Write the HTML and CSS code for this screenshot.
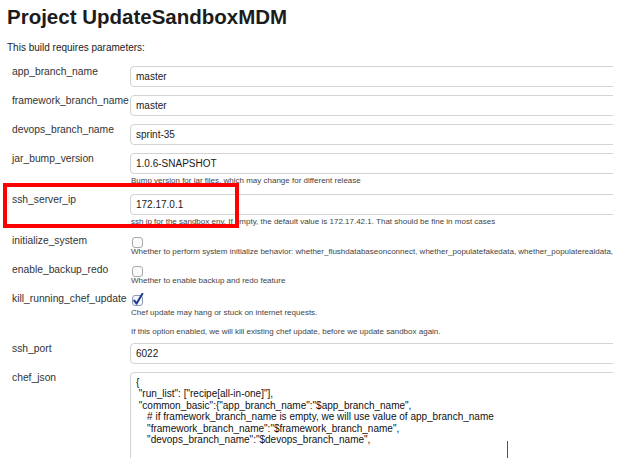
FILE: index.html
```html
<!DOCTYPE html>
<html>
<head>
<meta charset="utf-8">
<title>Project UpdateSandboxMDM</title>
<link rel="stylesheet" href="styles.css">
</head>
<body>
<div class="page">
  <h1 class="title">Project UpdateSandboxMDM</h1>
  <p class="intro">This build requires parameters:</p>
  <div class="params">
    <div class="row">
      <div class="label">app_branch_name</div>
      <div class="value"><input class="field" type="text" value="master"></div>
    </div>
    <div class="row">
      <div class="label">framework_branch_name</div>
      <div class="value"><input class="field" type="text" value="master"></div>
    </div>
    <div class="row">
      <div class="label">devops_branch_name</div>
      <div class="value"><input class="field" type="text" value="sprint-35"></div>
    </div>
    <div class="row">
      <div class="label">jar_bump_version</div>
      <div class="value">
        <input class="field" type="text" value="1.0.6-SNAPSHOT">
        <div class="help">Bump version for jar files, which may change for different release</div>
      </div>
    </div>
    <div class="row">
      <div class="label">ssh_server_ip</div>
      <div class="value">
        <input class="field" type="text" value="172.17.0.1">
        <div class="help">ssh ip for the sandbox env. If empty, the default value is 172.17.42.1. That should be fine in most cases</div>
      </div>
      <span class="mark"></span>
    </div>
    <div class="row check">
      <div class="label">initialize_system</div>
      <div class="value">
        <span class="cb"><svg width="11" height="11" viewBox="0 0 11 11"><rect x="0.5" y="0.5" width="10" height="10" rx="2.5" fill="#fafafa" stroke="#a9a9a9"/></svg></span>
        <div class="help">Whether to perform system initialize behavior: whether_flushdatabaseonconnect, whether_populatefakedata, whether_populaterealdata,</div>
      </div>
    </div>
    <div class="row check">
      <div class="label">enable_backup_redo</div>
      <div class="value">
        <span class="cb"><svg width="11" height="11" viewBox="0 0 11 11"><rect x="0.5" y="0.5" width="10" height="10" rx="2.5" fill="#fafafa" stroke="#a9a9a9"/></svg></span>
        <div class="help">Whether to enable backup and redo feature</div>
      </div>
    </div>
    <div class="row check kill">
      <div class="label">kill_running_chef_update</div>
      <div class="value">
        <span class="cb"><svg width="11" height="11" viewBox="0 0 11 11"><rect x="0.5" y="0.5" width="10" height="10" rx="2.5" fill="#f4f6fa" stroke="#8f9bb3"/><path d="M2.3 5.6 L4.6 8.6 L10.4 -1.2" fill="none" stroke="#1b3c86" stroke-width="2" stroke-linecap="round" stroke-linejoin="round"/></svg></span>
        <div class="help first">Chef update may hang or stuck on internet requests.</div>
        <div class="help second">If this option enabled, we will kill existing chef update, before we update sandbox again.</div>
      </div>
    </div>
    <div class="row">
      <div class="label">ssh_port</div>
      <div class="value"><input class="field" type="text" value="6022"></div>
    </div>
    <div class="row json">
      <div class="label">chef_json</div>
      <div class="value"><textarea class="area" wrap="off">
{
 "run_list": ["recipe[all-in-one]"],
 "common_basic":{"app_branch_name":"$app_branch_name",
    # if framework_branch_name is empty, we will use value of app_branch_name
    "framework_branch_name":"$framework_branch_name",
    "devops_branch_name":"$devops_branch_name",</textarea></div>
      <span class="cursor"></span>
    </div>
  </div>
</div>
</body>
</html>
```

FILE: styles.css
```css
html, body {
  margin: 0;
  padding: 0;
  background: #fff;
  overflow: hidden;
}

body {
  height: 458px;
  font-family: "Liberation Sans", Arial, sans-serif;
  color: #333;
}

.page {
  padding: 5px 0 0 7px;
}

.title {
  margin: 0;
  font-size: 20.5px;
  line-height: 24px;
  font-weight: bold;
  color: #1c1c1c;
}

.intro {
  margin: 12px 0 0;
  font-size: 10px;
  line-height: 14px;
  color: #222;
}

.params {
  margin-top: 11px;
  padding-left: 5px;
  display: flex;
  flex-direction: column;
}

.row {
  display: flex;
  position: relative;
  margin-bottom: 8px;
}

.row.check {
  margin-bottom: 7px;
}

.row.kill {
  margin-bottom: 6px;
}

.label {
  width: 118px;
  flex: none;
  margin-top: -1px;
  font-size: 10.3px;
  line-height: 13px;
  white-space: nowrap;
  color: #333;
}

.row.check .label {
  margin-top: -1.5px;
}

.value {
  width: 483px;
  flex: none;
  overflow: hidden;
}

.field {
  display: block;
  width: 520px;
  height: 21px;
  margin: 0;
  box-sizing: border-box;
  border: 1px solid #d3d3d3;
  border-radius: 4px;
  padding: 0 5px;
  background: #fff;
  font-family: "Liberation Sans", Arial, sans-serif;
  font-size: 10px;
  color: #1a1a1a;
  outline: none;
}

.help {
  margin-top: 2px;
  padding-left: 1px;
  font-size: 8px;
  line-height: 10px;
  color: #444;
  white-space: nowrap;
}

.cb {
  display: block;
  width: 11px;
  height: 10px;
  margin: 2px 0 0 2px;
}

.cb svg {
  display: block;
  overflow: visible;
}

.row.check .help {
  margin-top: 0;
}

.row.check .help.first {
  margin-top: 3px;
}

.row.check .help.second {
  margin-top: 9px;
}

.area {
  display: block;
  width: 520px;
  height: 110px;
  margin: 0;
  box-sizing: border-box;
  border: 1px solid #d3d3d3;
  border-radius: 4px;
  padding: 4px 5px;
  background: #fff;
  font-family: "Liberation Sans", Arial, sans-serif;
  font-size: 10px;
  line-height: 11.4px;
  color: #111;
  resize: none;
  overflow: hidden;
  white-space: pre;
  outline: none;
}

.mark {
  position: absolute;
  left: -9px;
  top: -11px;
  width: 236px;
  height: 45px;
  box-sizing: border-box;
  border: 4px solid #f00;
  z-index: 2;
}

.cursor {
  position: absolute;
  left: 495px;
  top: 69px;
  width: 1px;
  height: 20px;
  background: #555;
}
```
